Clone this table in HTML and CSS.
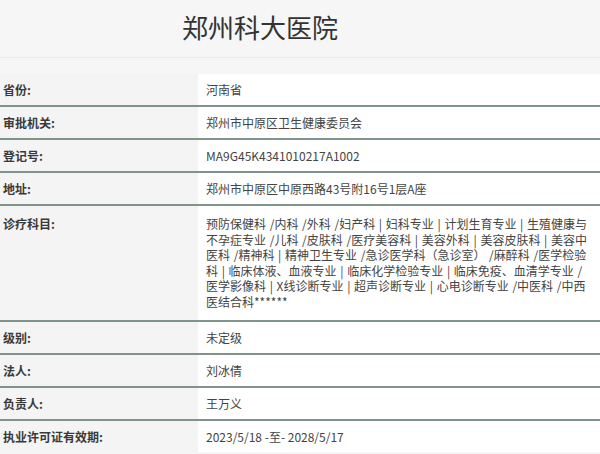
FILE: index.html
```html
<!DOCTYPE html>
<html lang="zh-CN">
<head>
<meta charset="utf-8">
<title>郑州科大医院</title>
<link rel="stylesheet" href="styles.css">
</head>
<body>
<header class="head">
  <h1 class="title">郑州科大医院</h1>
</header>
<div class="info">
  <div class="row"><div class="label">省份:</div><div class="value">河南省</div></div>
  <div class="row"><div class="label">审批机关:</div><div class="value">郑州市中原区卫生健康委员会</div></div>
  <div class="row"><div class="label">登记号:</div><div class="value">MA9G45K4341010217A1002</div></div>
  <div class="row"><div class="label">地址:</div><div class="value">郑州市中原区中原西路43号附16号1层A座</div></div>
  <div class="row row-multi"><div class="label">诊疗科目:</div><div class="value scope">预防保健科 /内科 /外科 /妇产科 | 妇科专业 | 计划生育专业 | 生殖健康与不孕症专业 /儿科 /皮肤科 /医疗美容科 | 美容外科 | 美容皮肤科 | 美容中医科 /精神科 | 精神卫生专业 /急诊医学科（急诊室） /麻醉科 /医学检验科 | 临床体液、血液专业 | 临床化学检验专业 | 临床免疫、血清学专业 /医学影像科 | X线诊断专业 | 超声诊断专业 | 心电诊断专业 /中医科 /中西医结合科******</div></div>
  <div class="row"><div class="label">级别:</div><div class="value">未定级</div></div>
  <div class="row"><div class="label">法人:</div><div class="value">刘冰倩</div></div>
  <div class="row"><div class="label">负责人:</div><div class="value">王万义</div></div>
  <div class="row row-last"><div class="label">执业许可证有效期:</div><div class="value">2023/5/18 -至- 2028/5/17</div></div>
</div>
</body>
</html>
```
FILE: styles.css
```css
html, body {
  margin: 0;
  padding: 0;
  background: #f6f6f6;
  font-family: "Noto Sans CJK SC", "Noto Sans", sans-serif;
}
.head {
  height: 58px;
  border-bottom: 1px solid #ebebeb;
  display: flex;
  align-items: center;
  justify-content: center;
  padding-right: 80px;
  box-sizing: border-box;
}
.title {
  margin: 0;
  font-size: 26px;
  font-weight: 400;
  color: #333;
  line-height: 1;
  padding-bottom: 4px;
}
.info {
  margin-top: 16px;
}
.row {
  display: grid;
  grid-template-columns: 198px 1fr;
  border-bottom: 2px solid #7f958c;
}
.label {
  background: #f4f4f4;
  padding: 8px 3px;
  font-size: 12px;
  line-height: 15px;
  font-weight: 700;
  color: #3a3a3a;
}
.value {
  background: #fff;
  padding: 8px 8px;
  font-size: 12px;
  line-height: 15px;
  color: #444;
}
.scope {
  word-spacing: 1px;
}
.row-multi .label,
.row-multi .value {
  padding-top: 10px;
  padding-bottom: 11px;
  line-height: 15.5px;
}
.row-last {
  border-bottom: none;
}
```
